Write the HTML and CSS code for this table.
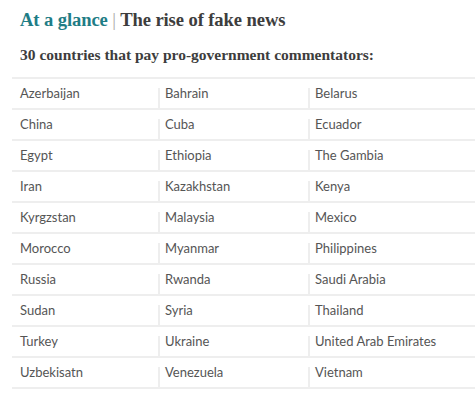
FILE: index.html
```html
<!DOCTYPE html>
<html>
<head>
<meta charset="utf-8">
<link rel="stylesheet" href="styles.css">
</head>
<body>
<div class="wrap">
  <h1 class="title"><span class="kicker">At a glance</span> <span class="bar">|</span> The rise of fake news</h1>
  <h2 class="sub">30 countries that pay pro-government commentators:</h2>
  <div class="table">
    <div class="row"><div class="cell"><div class="in">Azerbaijan</div></div><div class="cell"><div class="in sep">Bahrain</div></div><div class="cell"><div class="in sep">Belarus</div></div></div>
    <div class="row"><div class="cell"><div class="in">China</div></div><div class="cell"><div class="in sep">Cuba</div></div><div class="cell"><div class="in sep">Ecuador</div></div></div>
    <div class="row"><div class="cell"><div class="in">Egypt</div></div><div class="cell"><div class="in sep">Ethiopia</div></div><div class="cell"><div class="in sep">The Gambia</div></div></div>
    <div class="row"><div class="cell"><div class="in">Iran</div></div><div class="cell"><div class="in sep">Kazakhstan</div></div><div class="cell"><div class="in sep">Kenya</div></div></div>
    <div class="row"><div class="cell"><div class="in">Kyrgzstan</div></div><div class="cell"><div class="in sep">Malaysia</div></div><div class="cell"><div class="in sep">Mexico</div></div></div>
    <div class="row"><div class="cell"><div class="in">Morocco</div></div><div class="cell"><div class="in sep">Myanmar</div></div><div class="cell"><div class="in sep">Philippines</div></div></div>
    <div class="row"><div class="cell"><div class="in">Russia</div></div><div class="cell"><div class="in sep">Rwanda</div></div><div class="cell"><div class="in sep">Saudi Arabia</div></div></div>
    <div class="row"><div class="cell"><div class="in">Sudan</div></div><div class="cell"><div class="in sep">Syria</div></div><div class="cell"><div class="in sep">Thailand</div></div></div>
    <div class="row"><div class="cell"><div class="in">Turkey</div></div><div class="cell"><div class="in sep">Ukraine</div></div><div class="cell"><div class="in sep">United Arab Emirates</div></div></div>
    <div class="row"><div class="cell"><div class="in">Uzbekisatn</div></div><div class="cell"><div class="in sep">Venezuela</div></div><div class="cell"><div class="in sep">Vietnam</div></div></div>
  </div>
</div>
</body>
</html>
```

FILE: styles.css
```css
html, body {
  margin: 0;
  padding: 0;
  background: #fff;
}
.wrap {
  padding-top: 8px;
}
.title {
  margin: 0 0 0 20px;
  font-family: "Liberation Serif", serif;
  font-weight: bold;
  font-size: 18.6px;
  line-height: 24px;
  color: #3d3d3d;
  letter-spacing: -0.1px;
}
.kicker {
  color: #1f7d86;
}
.bar {
  color: #aaa;
  font-weight: normal;
}
.sub {
  margin: 13px 0 0 20px;
  font-family: "Liberation Serif", serif;
  font-weight: bold;
  font-size: 15.5px;
  line-height: 20px;
  color: #3d3d3d;
}
.table {
  margin: 12px 0 0 12px;
  border-top: 2px solid #eeeeee;
}
.row {
  display: grid;
  grid-template-columns: 146px 150px 1fr;
  border-bottom: 2px solid #eeeeee;
}
.cell {
  padding-top: 9px;
}
.in {
  height: 20px;
  padding-left: 8px;
  font-family: Lato, sans-serif;
  font-size: 13px;
  line-height: 10px;
  color: #555;
}
.in.sep {
  border-left: 2px solid #eeeeee;
  padding-left: 5px;
}
```
